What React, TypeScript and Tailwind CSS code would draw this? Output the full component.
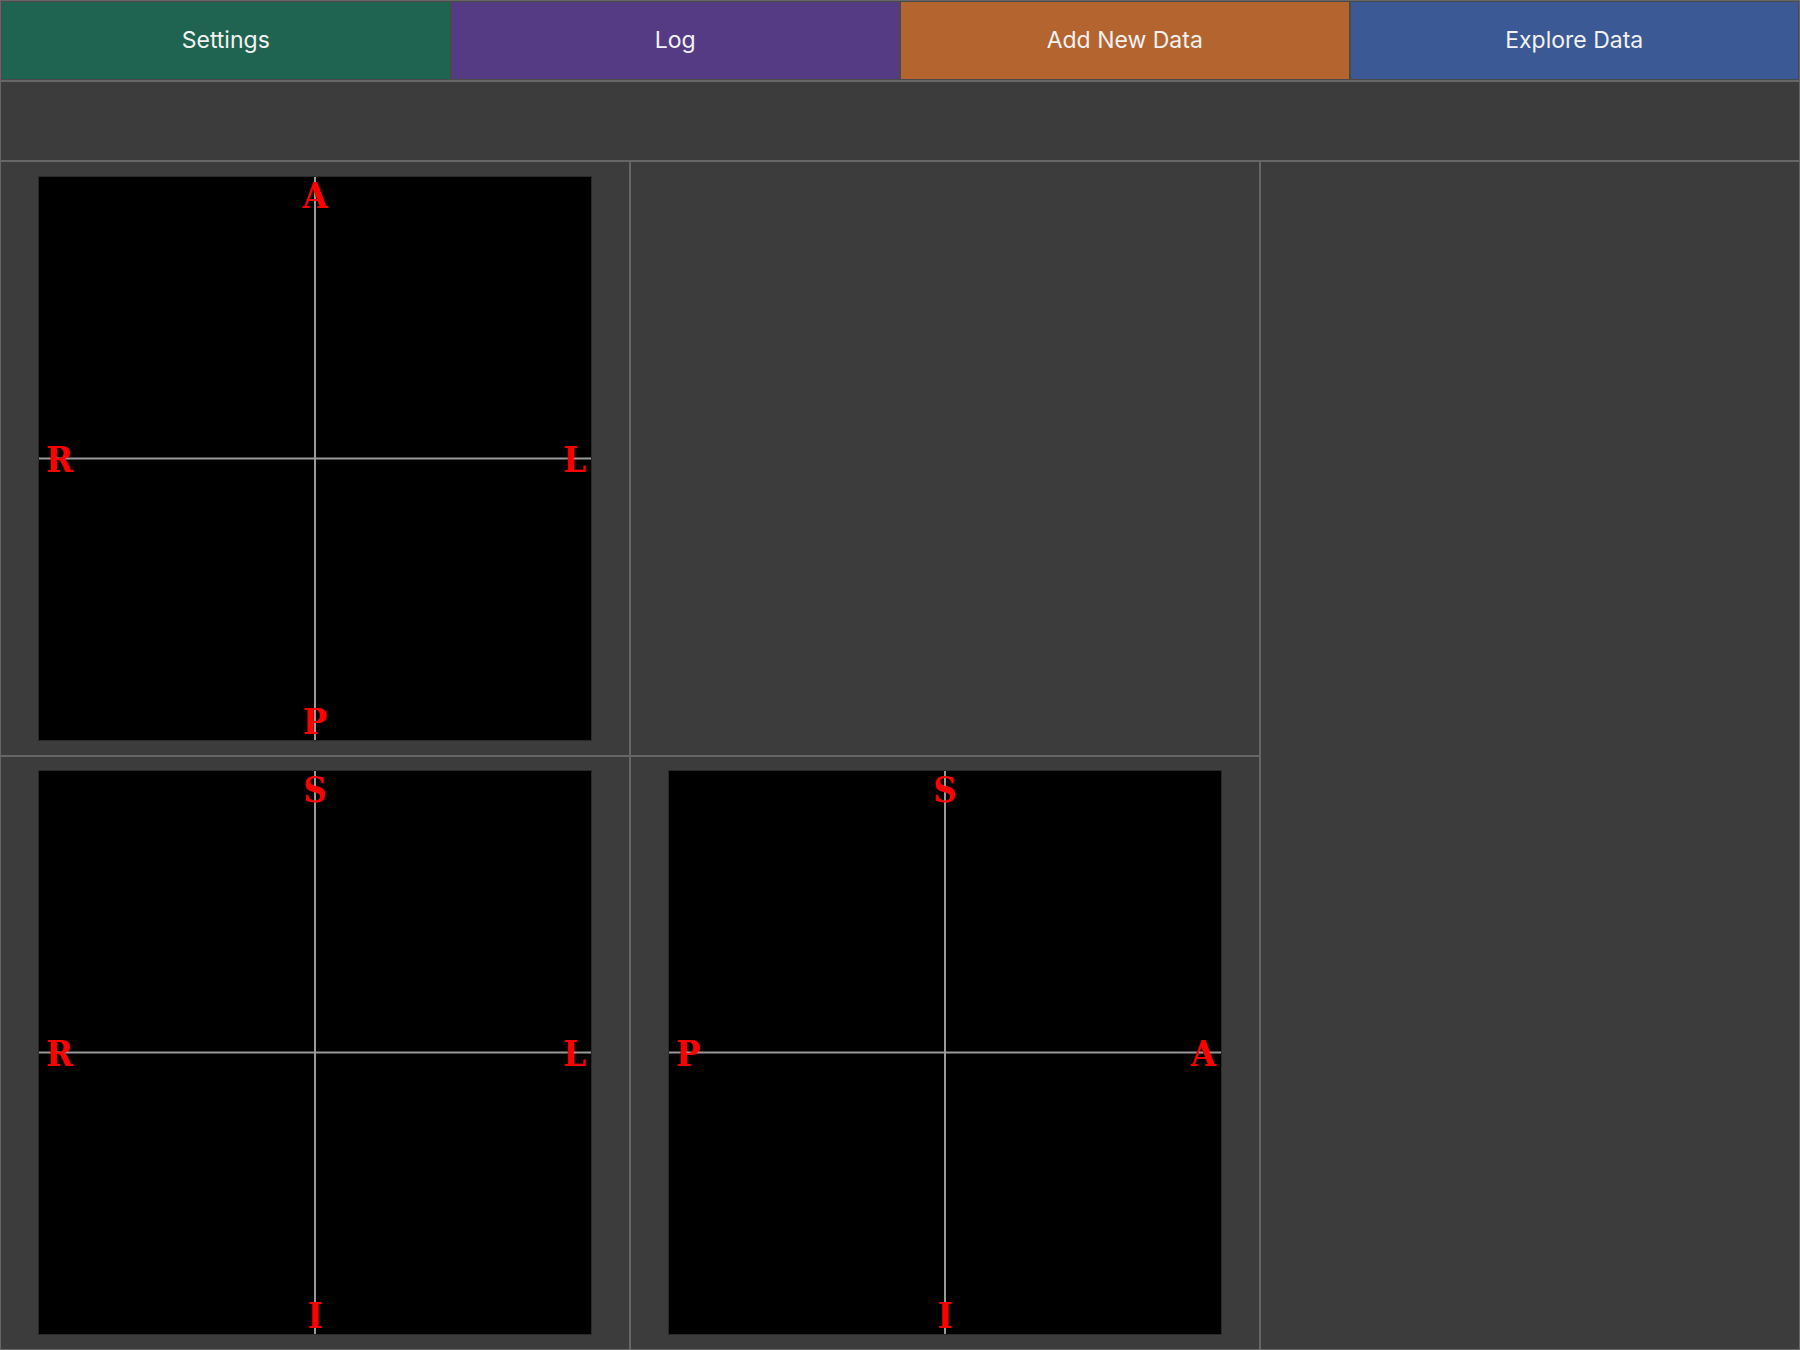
const tabs = [
    { label: "Settings", className: "bg-[#1f6450]" },
    { label: "Log", className: "bg-[#553b84]" },
    { label: "Add New Data", className: "bg-[#b4652f]" },
    { label: "Explore Data", className: "bg-[#3b5995]" },
];

type Labels = { top: string; bottom: string; left: string; right: string };

const W = 552;
const H = 563;

const Viewer = ({ labels }: { labels: Labels }) => {
    const cx = W / 2;
    const cy = H / 2;
    const text = {
        fill: "#ff0000",
        fontFamily: "'DejaVu Serif', 'Liberation Serif', serif",
        fontStretch: "condensed",
        fontWeight: 700,
        fontSize: 36,
    };
    return (
        <svg width={W} height={H} viewBox={`0 0 ${W} ${H}`} className="block bg-black shadow-[0_0_0_1px_#2a2a2a]">
            <line x1={cx} y1={0} x2={cx} y2={H} stroke="#9a9a9a" strokeWidth={2} />
            <line x1={0} y1={cy} x2={W} y2={cy} stroke="#9a9a9a" strokeWidth={2} />
            <text x={cx} y={31} textAnchor="middle" style={text}>{labels.top}</text>
            <text x={cx} y={557} textAnchor="middle" style={text}>{labels.bottom}</text>
            <text x={7} y={295} textAnchor="start" style={text}>{labels.left}</text>
            <text x={547} y={295} textAnchor="end" style={text}>{labels.right}</text>
        </svg>
    );
};

const Cell = ({ children, className = "" }: { children?: React.ReactNode; className?: string }) => (
    <div className={`flex items-center justify-center border border-[#666] bg-[#3c3c3c] ${className}`}>
        {children}
    </div>
);

export default function App() {
    return (
        <div className="flex h-[1350px] w-[1800px] flex-col bg-[#3c3c3c] font-['Inter','Liberation_Sans',sans-serif]">
            <div className="grid h-[81px] grid-cols-4 border border-[#666]">
                {tabs.map((tab) => (
                    <button
                        key={tab.label}
                        className={`flex items-center justify-center border border-[#4a4a4a] text-[23px] text-[#f2f2f2] ${tab.className}`}
                    >
                        {tab.label}
                    </button>
                ))}
            </div>
            <div className="h-[80px] border border-[#666] bg-[#3c3c3c]" />
            <div className="flex flex-1">
                <div className="grid w-[630px] grid-rows-2">
                    <Cell>
                        <Viewer labels={{ top: "A", bottom: "P", left: "R", right: "L" }} />
                    </Cell>
                    <Cell>
                        <Viewer labels={{ top: "S", bottom: "I", left: "R", right: "L" }} />
                    </Cell>
                </div>
                <div className="grid w-[630px] grid-rows-2">
                    <Cell />
                    <Cell>
                        <Viewer labels={{ top: "S", bottom: "I", left: "P", right: "A" }} />
                    </Cell>
                </div>
                <Cell className="flex-1" />
            </div>
        </div>
    );
}
